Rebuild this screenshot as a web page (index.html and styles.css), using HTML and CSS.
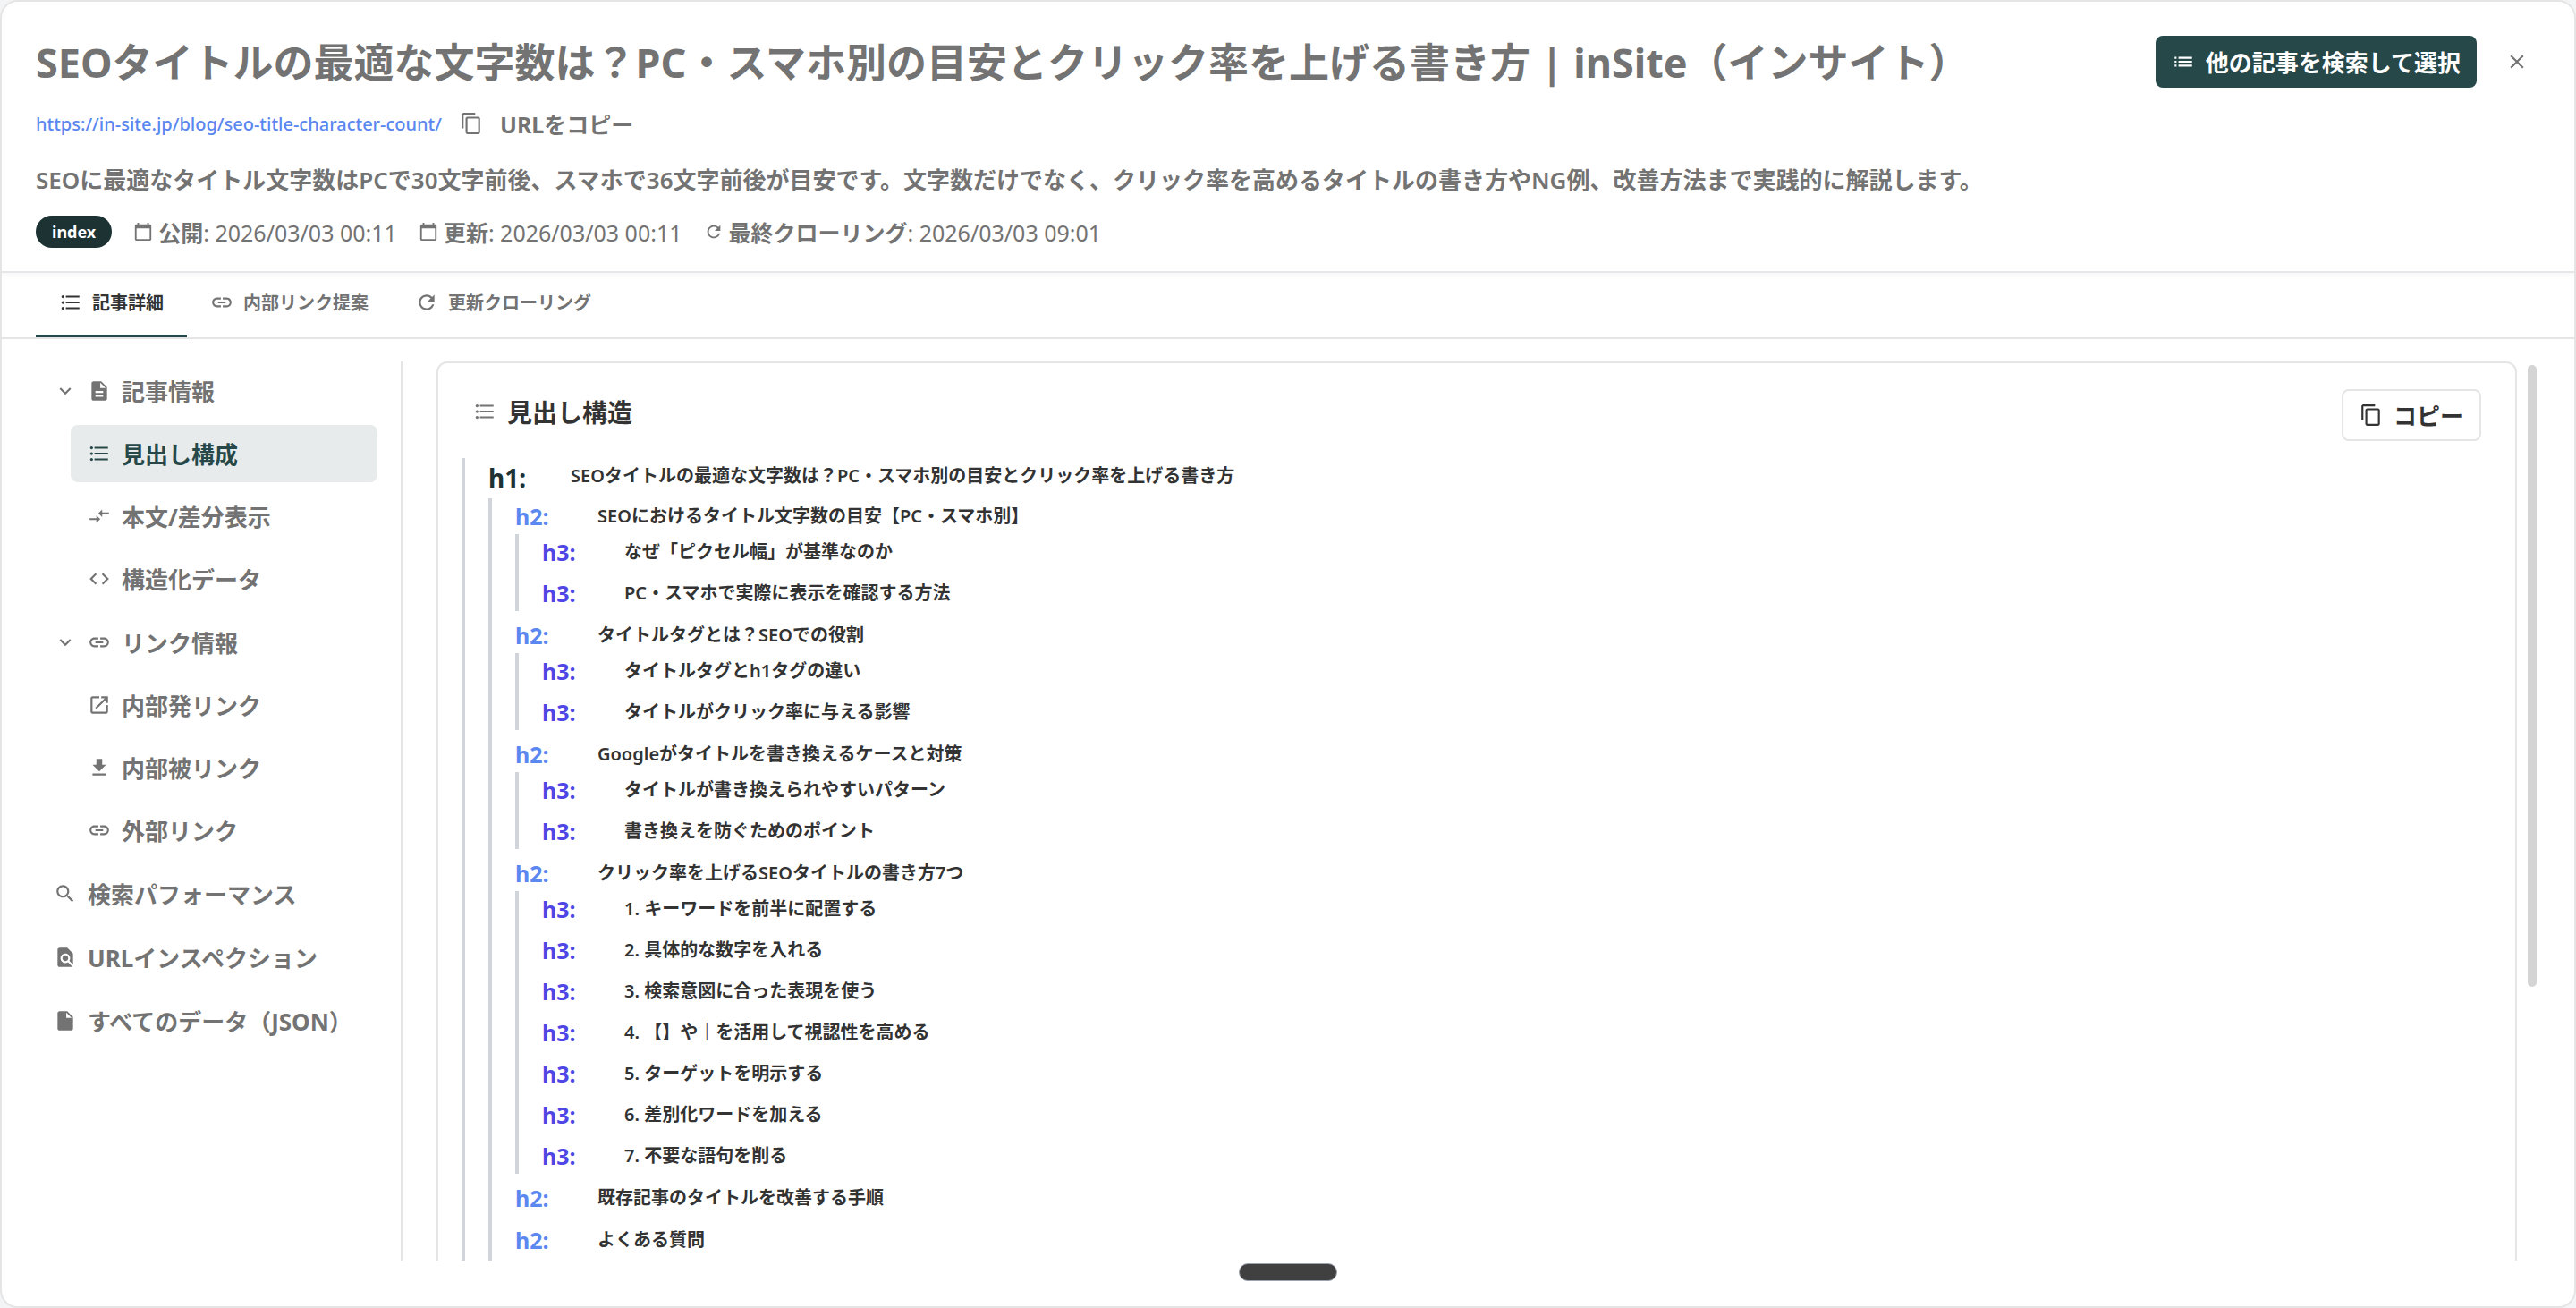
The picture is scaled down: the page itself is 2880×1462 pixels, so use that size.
FILE: index.html
```html
<!DOCTYPE html>
<html lang="ja">
  <head>
    <meta charset="UTF-8" />
    <meta name="viewport" content="width=device-width, initial-scale=1.0" />
    <title>記事詳細 | inSite</title>
    <link rel="stylesheet" href="styles.css">
  </head>
  <body>
    <!-- Shared icons -->
    <svg class="sprite" aria-hidden="true">
      <symbol id="i-list" viewBox="0 0 24 24"><path d="M3 13h2v-2H3v2zm0 4h2v-2H3v2zm0-8h2V7H3v2zm4 4h14v-2H7v2zm0 4h14v-2H7v2zM7 7v2h14V7H7z"/></symbol>
      <symbol id="i-bullets" viewBox="0 0 24 24"><path d="M4 10.5c-.83 0-1.5.67-1.5 1.5s.67 1.5 1.5 1.5 1.5-.67 1.5-1.5-.67-1.5-1.5-1.5zm0-6c-.83 0-1.5.67-1.5 1.5S3.170 7.500 4 7.500 5.500 6.830 5.500 6 4.830 4.500 4 4.500zm0 12c-.83 0-1.500.680-1.500 1.500s.680 1.500 1.500 1.500 1.500-.680 1.500-1.500-.670-1.500-1.500-1.500zM7 19h14v-2H7v2zm0-6h14v-2H7v2zm0-8v2h14V5H7z"/></symbol>
      <symbol id="i-close" viewBox="0 0 24 24"><path d="M19 6.410 17.590 5 12 10.590 6.410 5 5 6.410 10.590 12 5 17.590 6.410 19 12 13.410 17.590 19 19 17.590 13.410 12z"/></symbol>
      <symbol id="i-copy" viewBox="0 0 24 24"><path d="M16 1H4c-1.100 0-2 .9-2 2v14h2V3h12V1zm3 4H8c-1.100 0-2 .9-2 2v14c0 1.100.9 2 2 2h11c1.100 0 2-.9 2-2V7c0-1.100-.9-2-2-2zm0 16H8V7h11v14z"/></symbol>
      <symbol id="i-calendar" viewBox="0 0 24 24"><path d="M20 3h-1V1h-2v2H7V1H5v2H4c-1.100 0-2 .9-2 2v16c0 1.100.9 2 2 2h16c1.100 0 2-.9 2-2V5c0-1.100-.9-2-2-2zm0 18H4V8h16v13z"/></symbol>
      <symbol id="i-refresh" viewBox="0 0 24 24"><path d="M17.650 6.350C16.200 4.900 14.210 4 12 4c-4.420 0-7.990 3.580-7.990 8s3.570 8 7.990 8c3.730 0 6.840-2.550 7.730-6h-2.080c-.82 2.330-3.040 4-5.650 4-3.310 0-6-2.690-6-6s2.690-6 6-6c1.660 0 3.140.69 4.220 1.780L13 11h7V4l-2.350 2.350z"/></symbol>
      <symbol id="i-link" viewBox="0 0 24 24"><path d="M3.900 12c0-1.710 1.390-3.100 3.100-3.100h4V7H7c-2.760 0-5 2.240-5 5s2.240 5 5 5h4v-1.900H7c-1.710 0-3.100-1.390-3.100-3.100zM8 13h8v-2H8v2zm9-6h-4v1.900h4c1.710 0 3.100 1.390 3.100 3.100s-1.390 3.100-3.100 3.100h-4V17h4c2.760 0 5-2.240 5-5s-2.240-5-5-5z"/></symbol>
      <symbol id="i-chevron" viewBox="0 0 24 24"><path d="M16.590 8.590 12 13.170 7.410 8.590 6 10l6 6 6-6z"/></symbol>
      <symbol id="i-article" viewBox="0 0 24 24"><path d="M14 2H6c-1.100 0-1.990.9-1.990 2L4 20c0 1.100.89 2 1.990 2H18c1.100 0 2-.9 2-2V8l-6-6zm2 16H8v-2h8v2zm0-4H8v-2h8v2zm-3-5V3.500L18.500 9H13z"/></symbol>
      <symbol id="i-compare" viewBox="0 0 24 24"><path d="M9.010 14H2v2h7.010v3L13 15l-3.990-4v3zm5.980-1v-3H22V8h-7.010V5L11 9l3.990 4z"/></symbol>
      <symbol id="i-code" viewBox="0 0 24 24"><path d="M9.400 16.600 4.800 12l4.600-4.600L8 6l-6 6 6 6 1.400-1.400zm5.200 0 4.600-4.600-4.600-4.600L16 6l6 6-6 6-1.400-1.400z"/></symbol>
      <symbol id="i-open" viewBox="0 0 24 24"><path d="M19 19H5V5h7V3H5c-1.110 0-2 .9-2 2v14c0 1.100.89 2 2 2h14c1.100 0 2-.9 2-2v-7h-2v7zM14 3v2h3.590l-9.830 9.830 1.410 1.410L19 6.410V10h2V3h-7z"/></symbol>
      <symbol id="i-download" viewBox="0 0 24 24"><path d="M19 9h-4V3H9v6H5l7 7 7-7zM5 18v2h14v-2H5z"/></symbol>
      <symbol id="i-search" viewBox="0 0 24 24"><path d="M15.500 14h-.79l-.28-.27C15.410 12.590 16 11.110 16 9.500 16 5.910 13.090 3 9.500 3S3 5.910 3 9.500 5.910 16 9.500 16c1.610 0 3.090-.59 4.230-1.570l.27.28v.79l5 4.990L20.490 19l-4.990-5zm-6 0C7.010 14 5 11.990 5 9.500S7.010 5 9.500 5 14 7.010 14 9.500 11.990 14 9.500 14z"/></symbol>
      <symbol id="i-inspect" viewBox="0 0 24 24"><path d="M20 19.590V8l-6-6H6c-1.100 0-1.990.9-1.990 2L4 20c0 1.100.89 2 1.990 2H18c.45 0 .85-.15 1.190-.4l-4.430-4.430c-.8.52-1.740.83-2.760.83-2.760 0-5-2.240-5-5s2.240-5 5-5 5 2.240 5 5c0 1.020-.31 1.960-.83 2.750L20 19.590zM9 13c0 1.660 1.340 3 3 3s3-1.340 3-3-1.340-3-3-3-3 1.340-3 3z"/></symbol>
      <symbol id="i-file" viewBox="0 0 24 24"><path d="M6 2c-1.100 0-1.990.9-1.990 2L4 20c0 1.100.89 2 1.990 2H18c1.100 0 2-.9 2-2V8l-6-6H6zm7 7V3.500L18.500 9H13z"/></symbol>
    </svg>

    <div class="dialog" role="dialog" aria-labelledby="article-title">
      <header class="header">
        <div class="header-top">
          <h1 class="title" id="article-title">SEOタイトルの最適な文字数は？PC・スマホ別の目安とクリック率を上げる書き方 | inSite（インサイト）</h1>
          <div class="header-actions">
            <button class="btn btn-primary"><svg class="icon"><use href="#i-list"/></svg>他の記事を検索して選択</button>
            <button class="btn-close" aria-label="閉じる"><svg class="icon"><use href="#i-close"/></svg></button>
          </div>
        </div>
        <div class="url-row">
          <a class="url" href="https://in-site.jp/blog/seo-title-character-count/">https://in-site.jp/blog/seo-title-character-count/</a>
          <button class="btn-text"><svg class="icon"><use href="#i-copy"/></svg>URLをコピー</button>
        </div>
        <p class="description">SEOに最適なタイトル文字数はPCで30文字前後、スマホで36文字前後が目安です。文字数だけでなく、クリック率を高めるタイトルの書き方やNG例、改善方法まで実践的に解説します。</p>
        <div class="meta">
          <span class="chip">index</span>
          <span class="meta-item"><svg class="icon-sm"><use href="#i-calendar"/></svg><span>公開<time>: 2026/03/03 00:11</time></span></span>
          <span class="meta-item"><svg class="icon-sm"><use href="#i-calendar"/></svg><span>更新<time>: 2026/03/03 00:11</time></span></span>
          <span class="meta-item"><svg class="icon-sm"><use href="#i-refresh"/></svg><span>最終クローリング<time>: 2026/03/03 09:01</time></span></span>
        </div>
      </header>

      <nav class="tabs">
        <button class="tab active"><svg class="icon"><use href="#i-bullets"/></svg>記事詳細</button>
        <button class="tab"><svg class="icon"><use href="#i-link"/></svg>内部リンク提案</button>
        <button class="tab"><svg class="icon"><use href="#i-refresh"/></svg>更新クローリング</button>
      </nav>

      <div class="body">
        <nav class="sidebar">
          <ul class="menu">
            <li>
              <button class="menu-item"><svg class="icon"><use href="#i-chevron"/></svg><svg class="icon"><use href="#i-article"/></svg>記事情報</button>
              <ul class="submenu">
                <li><button class="menu-item active"><svg class="icon"><use href="#i-bullets"/></svg>見出し構成</button></li>
                <li><button class="menu-item"><svg class="icon"><use href="#i-compare"/></svg>本文/差分表示</button></li>
                <li><button class="menu-item"><svg class="icon"><use href="#i-code"/></svg>構造化データ</button></li>
              </ul>
            </li>
            <li>
              <button class="menu-item"><svg class="icon"><use href="#i-chevron"/></svg><svg class="icon"><use href="#i-link"/></svg>リンク情報</button>
              <ul class="submenu">
                <li><button class="menu-item"><svg class="icon"><use href="#i-open"/></svg>内部発リンク</button></li>
                <li><button class="menu-item"><svg class="icon"><use href="#i-download"/></svg>内部被リンク</button></li>
                <li><button class="menu-item"><svg class="icon"><use href="#i-link"/></svg>外部リンク</button></li>
              </ul>
            </li>
            <li><button class="menu-item"><svg class="icon"><use href="#i-search"/></svg>検索パフォーマンス</button></li>
            <li><button class="menu-item"><svg class="icon"><use href="#i-inspect"/></svg>URLインスペクション</button></li>
            <li><button class="menu-item"><svg class="icon"><use href="#i-file"/></svg>すべてのデータ（JSON）</button></li>
          </ul>
        </nav>

        <main class="content">
          <section class="panel">
            <div class="panel-head">
              <h2 class="panel-title"><svg class="icon"><use href="#i-bullets"/></svg>見出し構造</h2>
              <button class="btn btn-outline"><svg class="icon"><use href="#i-copy"/></svg>コピー</button>
            </div>
            <ul class="tree">
              <li>
                <div class="row row-h1"><span class="tag">h1:</span><span>SEOタイトルの最適な文字数は？PC・スマホ別の目安とクリック率を上げる書き方</span></div>
                <ul class="tree tree-h2">
                  <li>
                    <div class="row row-h2"><span class="tag">h2:</span><span>SEOにおけるタイトル文字数の目安【PC・スマホ別】</span></div>
                    <ul class="tree tree-h3">
                      <li class="row row-h3"><span class="tag">h3:</span><span>なぜ「ピクセル幅」が基準なのか</span></li>
                      <li class="row row-h3"><span class="tag">h3:</span><span>PC・スマホで実際に表示を確認する方法</span></li>
                    </ul>
                  </li>
                  <li>
                    <div class="row row-h2"><span class="tag">h2:</span><span>タイトルタグとは？SEOでの役割</span></div>
                    <ul class="tree tree-h3">
                      <li class="row row-h3"><span class="tag">h3:</span><span>タイトルタグとh1タグの違い</span></li>
                      <li class="row row-h3"><span class="tag">h3:</span><span>タイトルがクリック率に与える影響</span></li>
                    </ul>
                  </li>
                  <li>
                    <div class="row row-h2"><span class="tag">h2:</span><span>Googleがタイトルを書き換えるケースと対策</span></div>
                    <ul class="tree tree-h3">
                      <li class="row row-h3"><span class="tag">h3:</span><span>タイトルが書き換えられやすいパターン</span></li>
                      <li class="row row-h3"><span class="tag">h3:</span><span>書き換えを防ぐためのポイント</span></li>
                    </ul>
                  </li>
                  <li>
                    <div class="row row-h2"><span class="tag">h2:</span><span>クリック率を上げるSEOタイトルの書き方7つ</span></div>
                    <ul class="tree tree-h3">
                      <li class="row row-h3"><span class="tag">h3:</span><span>1. キーワードを前半に配置する</span></li>
                      <li class="row row-h3"><span class="tag">h3:</span><span>2. 具体的な数字を入れる</span></li>
                      <li class="row row-h3"><span class="tag">h3:</span><span>3. 検索意図に合った表現を使う</span></li>
                      <li class="row row-h3"><span class="tag">h3:</span><span>4. 【】や｜を活用して視認性を高める</span></li>
                      <li class="row row-h3"><span class="tag">h3:</span><span>5. ターゲットを明示する</span></li>
                      <li class="row row-h3"><span class="tag">h3:</span><span>6. 差別化ワードを加える</span></li>
                      <li class="row row-h3"><span class="tag">h3:</span><span>7. 不要な語句を削る</span></li>
                    </ul>
                  </li>
                  <li>
                    <div class="row row-h2"><span class="tag">h2:</span><span>既存記事のタイトルを改善する手順</span></div>
                  </li>
                  <li>
                    <div class="row row-h2"><span class="tag">h2:</span><span>よくある質問</span></div>
                  </li>
                </ul>
              </li>
            </ul>
          </section>
          <div class="scrollbar"><div class="scrollbar-thumb"></div></div>
        </main>
      </div>

      <footer class="footer">
        <div class="handle"></div>
      </footer>
    </div>
  </body>
</html>
```
FILE: styles.css
```css
:root {
  --primary: #264849;
  --primary-dark: #1c3233;
  --text: #333333;
  --muted: #737373;
  --border: #e5e5e5;
  --blue: #5b87f0;
  --indigo: #4f46e5;
}
* {
  box-sizing: border-box;
}
body {
  margin: 0;
  background: #f3f4f6;
  color: var(--text);
  font-family: "Noto Sans", "Noto Sans CJK JP", sans-serif;
  font-size: 26px;
}
button {
  font: inherit;
  color: inherit;
  background: none;
  border: 0;
  padding: 0;
  cursor: pointer;
}
ul {
  list-style: none;
  margin: 0;
  padding: 0;
}
.sprite {
  display: none;
}
.icon,
.icon-sm {
  width: 26px;
  height: 26px;
  flex: none;
  fill: currentColor;
}
.icon-sm {
  width: 22px;
  height: 22px;
}
.dialog {
  display: flex;
  flex-direction: column;
  height: 100vh;
  border: 2px solid var(--border);
  border-radius: 20px;
  background: #fff;
  overflow: hidden;
}

/* Header */
.header {
  display: flex;
  flex-direction: column;
  padding: 38px 38px 26px;
  color: var(--muted);
  border-bottom: 2px solid #e5e7eb;
  box-shadow: 0 2px 6px rgba(0, 0, 0, 0.04);
}
.header-top {
  display: flex;
  align-items: flex-start;
  justify-content: space-between;
  height: 58px;
}
.title {
  margin: 0;
  font-size: 45px;
  line-height: 60px;
  font-weight: 700;
}
.header-actions {
  display: flex;
  align-items: center;
  gap: 32px;
  padding-right: 13px;
}
.btn {
  display: flex;
  align-items: center;
  gap: 12px;
  height: 58px;
  padding: 0 18px;
  border-radius: 8px;
  font-weight: 700;
}
.btn-primary {
  background: var(--primary);
  color: #fff;
}
.btn-close {
  display: flex;
}
.url-row {
  display: flex;
  align-items: center;
  gap: 20px;
  height: 40px;
  margin-top: 20px;
}
.url {
  color: var(--blue);
  font-size: 20px;
  font-weight: 500;
  text-decoration: none;
}
.btn-text {
  display: flex;
  align-items: center;
  gap: 19px;
  font-size: 25px;
  font-weight: 700;
}
.description {
  margin: 23px 0 0;
  line-height: 40px;
  font-weight: 600;
}
.meta {
  display: flex;
  align-items: center;
  gap: 24px;
  height: 36px;
  margin-top: 20px;
  font-size: 25px;
  font-weight: 600;
}
.meta-item {
  display: flex;
  align-items: center;
  gap: 6px;
}
.meta-item time {
  font-weight: 400;
}
.chip {
  padding: 0 18px;
  border-radius: 18px;
  background: var(--primary-dark);
  color: #fff;
  font-size: 18px;
  line-height: 36px;
  font-weight: 700;
}

/* Tabs */
.tabs {
  display: flex;
  height: 74px;
  padding: 0 38px;
  border-bottom: 2px solid var(--border);
}
.tab {
  display: flex;
  align-items: center;
  gap: 11px;
  padding: 0 26px 4px;
  border-bottom: 3px solid transparent;
  color: var(--muted);
  font-size: 20px;
  font-weight: 600;
}
.tab.active {
  color: var(--text);
  border-bottom-color: var(--primary);
}

/* Body */
.body {
  display: flex;
  flex: 1;
  min-height: 0;
  gap: 38px;
  padding: 25px 42px 0 38px;
}
.sidebar {
  width: 410px;
  flex: none;
  padding-right: 26px;
  border-right: 2px solid var(--border);
}
.menu {
  display: flex;
  flex-direction: column;
  gap: 7px;
  padding-top: 1px;
}
.submenu {
  display: flex;
  flex-direction: column;
  gap: 6px;
  margin: 6px 0 0 39px;
}
.menu-item {
  display: flex;
  align-items: center;
  gap: 12px;
  width: 100%;
  height: 64px;
  padding: 0 20px;
  border-radius: 8px;
  color: var(--muted);
  font-weight: 700;
  white-space: nowrap;
}
.submenu .menu-item {
  padding: 0 19px;
}
.menu-item.active {
  background: #e8ebeb;
  color: var(--primary);
}
.content {
  display: flex;
  flex: 1;
  gap: 12px;
  min-width: 0;
  overflow: hidden;
}
.panel {
  flex: 1;
  height: max-content;
  min-height: calc(100% + 40px);
  padding: 29px 38px 80px 26px;
  border: 2px solid var(--border);
  border-radius: 12px;
}
.panel-head {
  display: flex;
  align-items: flex-start;
  justify-content: space-between;
  height: 77px;
}
.panel-title {
  display: flex;
  align-items: center;
  gap: 12px;
  height: 49px;
  margin: 0;
  padding-left: 13px;
  font-size: 28px;
  font-weight: 700;
}
.panel-title .icon {
  color: var(--muted);
}
.btn-outline {
  border: 2px solid var(--border);
}
.tree {
  display: flex;
  flex-direction: column;
  padding-left: 26px;
  border-left: 4px solid #d1d5db;
}
.tree-h2 {
  gap: 7px;
  padding-bottom: 26px;
}
.tree-h3 {
  gap: 6px;
}
.row {
  display: flex;
  height: 40px;
  font-size: 20px;
  line-height: 40px;
  font-weight: 600;
}
.tag {
  width: 92px;
  font-size: 25px;
  font-weight: 700;
}
.row-h1 {
  height: 45px;
}
.row-h1 .tag {
  color: var(--primary-dark);
  font-size: 28px;
  line-height: 45px;
}
.row-h2 .tag {
  color: var(--blue);
}
.row-h3 .tag {
  color: var(--indigo);
}

/* Scrollbar and resize handle */
.scrollbar {
  width: 10px;
  padding-top: 4px;
}
.scrollbar-thumb {
  height: 69.4%;
  border-radius: 5px;
  background: #d4d4d4;
}
.footer {
  display: flex;
  justify-content: center;
  height: 51px;
  padding-top: 3px;
}
.handle {
  width: 110px;
  height: 20px;
  border: 1px solid #9ca3af;
  border-radius: 10px;
  background: #404040;
}
```
